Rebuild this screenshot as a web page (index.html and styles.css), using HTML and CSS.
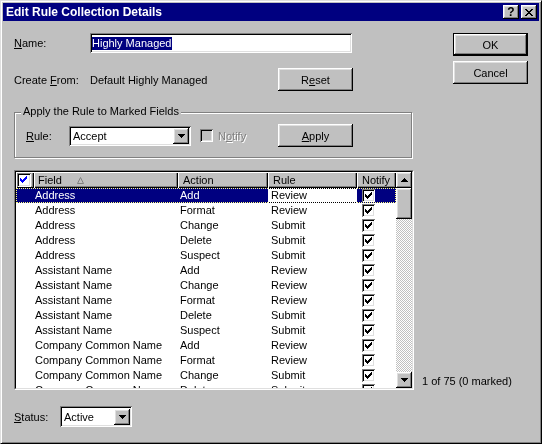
FILE: index.html
```html
<!DOCTYPE html>
<html lang="en">
<head>
    <meta charset="UTF-8">
    <title>Edit Rule Collection Details</title>
    <link rel="stylesheet" href="styles.css">
</head>
<body>
    <!-- shared check mark -->
    <svg class="defs" width="0" height="0">
        <symbol id="tick" viewBox="0 0 13 13">
            <path d="M3 5h1v3h-1zM4 6h1v3h-1zM5 7h1v3h-1zM6 6h1v3h-1zM7 5h1v3h-1zM8 4h1v3h-1zM9 3h1v3h-1z"/>
        </symbol>
        <symbol id="down" viewBox="0 0 7 4">
            <path d="M0 0h7v1h-1v1h-1v1h-1v1h-1v-1h-1v-1h-1v-1h-1z"/>
        </symbol>
    </svg>

    <div class="window">
        <div class="titlebar">
            <span class="title">Edit Rule Collection Details</span>
            <div class="caption-buttons">
                <div class="cap-btn">?</div>
                <div class="cap-btn">
                    <svg width="8" height="7" viewBox="0 0 8 7"><path d="M0 0h2v1h-2zM6 0h2v1h-2zM1 1h2v1h-2zM5 1h2v1h-2zM2 2h4v1h-4zM3 3h2v1h-2zM2 4h4v1h-4zM1 5h2v1h-2zM5 5h2v1h-2zM0 6h2v1h-2zM6 6h2v1h-2z"/></svg>
                </div>
            </div>
        </div>

        <div class="dialog">
            <div class="top">
                <div class="left">
                    <div class="line name-line">
                        <span class="label"><u>N</u>ame:</span>
                        <div class="textbox"><span class="sel">Highly Managed</span></div>
                    </div>
                    <div class="line from-line">
                        <span class="label">Create <u>F</u>rom:</span>
                        <span class="from-value">Default Highly Managed</span>
                        <div class="btn">R<u>e</u>set</div>
                    </div>
                    <div class="group">
                        <span class="group-title">Apply the Rule to Marked Fields</span>
                        <div class="line">
                            <span class="rule-label"><u>R</u>ule:</span>
                            <div class="combo rule-combo">
                                <span class="combo-text">Accept</span>
                                <div class="drop"><svg width="7" height="4"><use href="#down"/></svg></div>
                            </div>
                            <div class="notify">
                                <span class="checkbox disabled"></span>
                                <span class="disabled-text">N<u>o</u>tify</span>
                            </div>
                            <div class="btn"><u>A</u>pply</div>
                        </div>
                    </div>
                </div>
                <div class="actions">
                    <div class="btn default">OK</div>
                    <div class="btn">Cancel</div>
                </div>
            </div>

            <div class="list-area">
                <div class="listview">
                    <div class="list-inner">
                        <div class="grid">
                            <div class="header">
                                <div class="hcell hcheck"><span class="checkbox blue"><svg width="13" height="13"><use href="#tick"/></svg></span></div>
                                <div class="hcell hfield">Field
                                    <svg class="sort" width="7" height="7" viewBox="0 0 7 7"><path d="M0.5 6.5L3.5 0.5L6.5 6.5Z" fill="none" stroke="#808080"/></svg>
                                </div>
                                <div class="hcell">Action</div>
                                <div class="hcell">Rule</div>
                                <div class="hcell">Notify</div>
                            </div>

                            <div class="item selected">
                                <div></div><div class="c-field">Address</div><div class="c-action">Add</div><div class="c-rule">Review</div>
                                <div class="c-notify"><span class="checkbox"><svg width="13" height="13"><use href="#tick"/></svg></span></div>
                            </div>
                            <div class="item">
                                <div></div><div class="c-field">Address</div><div class="c-action">Format</div><div class="c-rule">Review</div>
                                <div class="c-notify"><span class="checkbox"><svg width="13" height="13"><use href="#tick"/></svg></span></div>
                            </div>
                            <div class="item">
                                <div></div><div class="c-field">Address</div><div class="c-action">Change</div><div class="c-rule">Submit</div>
                                <div class="c-notify"><span class="checkbox"><svg width="13" height="13"><use href="#tick"/></svg></span></div>
                            </div>
                            <div class="item">
                                <div></div><div class="c-field">Address</div><div class="c-action">Delete</div><div class="c-rule">Submit</div>
                                <div class="c-notify"><span class="checkbox"><svg width="13" height="13"><use href="#tick"/></svg></span></div>
                            </div>
                            <div class="item">
                                <div></div><div class="c-field">Address</div><div class="c-action">Suspect</div><div class="c-rule">Submit</div>
                                <div class="c-notify"><span class="checkbox"><svg width="13" height="13"><use href="#tick"/></svg></span></div>
                            </div>
                            <div class="item">
                                <div></div><div class="c-field">Assistant Name</div><div class="c-action">Add</div><div class="c-rule">Review</div>
                                <div class="c-notify"><span class="checkbox"><svg width="13" height="13"><use href="#tick"/></svg></span></div>
                            </div>
                            <div class="item">
                                <div></div><div class="c-field">Assistant Name</div><div class="c-action">Change</div><div class="c-rule">Review</div>
                                <div class="c-notify"><span class="checkbox"><svg width="13" height="13"><use href="#tick"/></svg></span></div>
                            </div>
                            <div class="item">
                                <div></div><div class="c-field">Assistant Name</div><div class="c-action">Format</div><div class="c-rule">Review</div>
                                <div class="c-notify"><span class="checkbox"><svg width="13" height="13"><use href="#tick"/></svg></span></div>
                            </div>
                            <div class="item">
                                <div></div><div class="c-field">Assistant Name</div><div class="c-action">Delete</div><div class="c-rule">Submit</div>
                                <div class="c-notify"><span class="checkbox"><svg width="13" height="13"><use href="#tick"/></svg></span></div>
                            </div>
                            <div class="item">
                                <div></div><div class="c-field">Assistant Name</div><div class="c-action">Suspect</div><div class="c-rule">Submit</div>
                                <div class="c-notify"><span class="checkbox"><svg width="13" height="13"><use href="#tick"/></svg></span></div>
                            </div>
                            <div class="item">
                                <div></div><div class="c-field">Company Common Name</div><div class="c-action">Add</div><div class="c-rule">Review</div>
                                <div class="c-notify"><span class="checkbox"><svg width="13" height="13"><use href="#tick"/></svg></span></div>
                            </div>
                            <div class="item">
                                <div></div><div class="c-field">Company Common Name</div><div class="c-action">Format</div><div class="c-rule">Review</div>
                                <div class="c-notify"><span class="checkbox"><svg width="13" height="13"><use href="#tick"/></svg></span></div>
                            </div>
                            <div class="item">
                                <div></div><div class="c-field">Company Common Name</div><div class="c-action">Change</div><div class="c-rule">Submit</div>
                                <div class="c-notify"><span class="checkbox"><svg width="13" height="13"><use href="#tick"/></svg></span></div>
                            </div>
                            <div class="item">
                                <div></div><div class="c-field">Company Common Name</div><div class="c-action">Delete</div><div class="c-rule">Submit</div>
                                <div class="c-notify"><span class="checkbox"><svg width="13" height="13"><use href="#tick"/></svg></span></div>
                            </div>
                        </div>
                        <div class="scrollbar">
                            <div class="sb-btn"><svg class="up" width="7" height="4"><use href="#down"/></svg></div>
                            <div class="sb-thumb"></div>
                            <div class="sb-track"></div>
                            <div class="sb-btn"><svg width="7" height="4"><use href="#down"/></svg></div>
                        </div>
                    </div>
                </div>
                <span class="count">1 of 75 (0 marked)</span>
            </div>

            <div class="line status-line">
                <span class="status-label"><u>S</u>tatus:</span>
                <div class="combo status-combo">
                    <span class="combo-text">Active</span>
                    <div class="drop"><svg width="7" height="4"><use href="#down"/></svg></div>
                </div>
            </div>
        </div>
    </div>
</body>
</html>
```

FILE: styles.css
```css
body {
    margin: 0;
    background-color: #c0c0c0;
    font-family: "Liberation Sans", Arial, sans-serif;
    font-size: 11px;
    color: #000;
}
.defs {
    position: absolute;
}
u {
    text-underline-offset: 1px;
}
.window {
    width: 542px;
    height: 444px;
    box-sizing: border-box;
    padding: 2px;
    background-color: #c0c0c0;
    border: 1px solid;
    border-color: #dfdfdf #000 #000 #dfdfdf;
    box-shadow: inset 1px 1px #fff, inset -1px -1px #808080;
}

/* title bar */
.titlebar {
    height: 18px;
    background-color: #000080;
    display: flex;
    align-items: center;
    justify-content: space-between;
    padding: 0 2px 0 3px;
}
.title {
    color: #fff;
    font-weight: bold;
    font-size: 12px;
}
.caption-buttons {
    display: flex;
    gap: 2px;
}
.cap-btn {
    width: 16px;
    height: 14px;
    background-color: #c0c0c0;
    box-shadow: inset -1px -1px #000, inset 1px 1px #fff, inset -2px -2px #808080, inset 2px 2px #dfdfdf;
    display: flex;
    align-items: center;
    justify-content: center;
    font-weight: bold;
    font-size: 12px;
    line-height: 14px;
}

/* common controls */
.btn {
    width: 75px;
    height: 23px;
    box-sizing: border-box;
    background-color: #c0c0c0;
    box-shadow: inset -1px -1px #000, inset 1px 1px #fff, inset -2px -2px #808080, inset 2px 2px #dfdfdf;
    display: flex;
    align-items: center;
    justify-content: center;
    flex-shrink: 0;
}
.btn.default {
    border: 1px solid #000;
}
.checkbox {
    display: block;
    width: 13px;
    height: 13px;
    background-color: #fff;
    box-shadow: inset 1px 1px #808080, inset -1px -1px #fff, inset 2px 2px #000, inset -2px -2px #dfdfdf;
    flex-shrink: 0;
}
.checkbox svg {
    display: block;
}
.checkbox.disabled {
    background-color: #c0c0c0;
}
.checkbox.blue {
    fill: #0000ff;
}
.combo {
    height: 20px;
    box-sizing: border-box;
    background-color: #fff;
    padding: 2px;
    display: flex;
    align-items: center;
    justify-content: space-between;
    box-shadow: inset 1px 1px #808080, inset -1px -1px #fff, inset 2px 2px #000, inset -2px -2px #dfdfdf;
}
.combo-text {
    padding-left: 2px;
}
.drop {
    width: 16px;
    height: 16px;
    background-color: #c0c0c0;
    box-shadow: inset -1px -1px #000, inset 1px 1px #fff, inset -2px -2px #808080, inset 2px 2px #dfdfdf;
    display: flex;
    align-items: center;
    justify-content: center;
}

/* dialog body */
.dialog {
    padding: 12px 11px 0 11px;
}
.top {
    display: flex;
}
.left {
    width: 400px;
}
.actions {
    margin-left: 39px;
    width: 75px;
    display: flex;
    flex-direction: column;
    gap: 5px;
}
.line {
    display: flex;
    align-items: center;
}
.label {
    width: 76px;
    flex-shrink: 0;
}
.name-line {
    height: 20px;
}
.textbox {
    width: 262px;
    height: 20px;
    box-sizing: border-box;
    background-color: #fff;
    padding: 2px;
    display: flex;
    align-items: center;
    box-shadow: inset 1px 1px #808080, inset -1px -1px #fff, inset 2px 2px #000, inset -2px -2px #dfdfdf;
}
.sel {
    background-color: #000080;
    color: #fff;
    line-height: 13px;
}
.from-line {
    margin-top: 15px;
    height: 23px;
}
.from-value {
    width: 188px;
}

/* group box */
.group {
    position: relative;
    margin-top: 21px;
    width: 398px;
    box-sizing: border-box;
    border: 1px solid #808080;
    box-shadow: inset 1px 1px #fff, 1px 1px #fff;
    padding: 11px 0 10px 11px;
}
.group-title {
    position: absolute;
    top: -8px;
    left: 6px;
    padding: 0 2px;
    background-color: #c0c0c0;
    line-height: 13px;
}
.rule-label {
    width: 43px;
}
.rule-combo {
    width: 122px;
}
.notify {
    width: 87px;
    box-sizing: border-box;
    padding-left: 9px;
    display: flex;
    align-items: center;
}
.disabled-text {
    margin-left: 5px;
    color: #808080;
    text-shadow: 1px 1px #fff;
}

/* list */
.list-area {
    margin-top: 12px;
    display: flex;
    align-items: flex-end;
}
.listview {
    width: 400px;
    height: 220px;
    box-sizing: border-box;
    border: 1px solid;
    border-color: #808080 #fff #fff #808080;
}
.list-inner {
    height: 100%;
    box-sizing: border-box;
    border: 1px solid;
    border-color: #000 #dfdfdf #dfdfdf #000;
    background-color: #fff;
    display: flex;
}
.grid {
    width: 380px;
    overflow: hidden;
}
.header,
.item {
    display: grid;
    grid-template-columns: 18px 144px 90px 89px 39px;
}
.header {
    height: 16px;
}
.hcell {
    background-color: #c0c0c0;
    box-shadow: inset 1px 1px #fff, inset -1px -1px #000, inset -2px -2px #808080;
    padding-left: 5px;
    display: flex;
    align-items: center;
    line-height: 16px;
}
.hcell.hfield {
    padding-left: 4px;
}
.hcell.hcheck {
    padding-left: 1px;
}
.hcheck .checkbox {
    width: 14px;
    height: 14px;
}
.sort {
    margin-left: 15px;
}
.item {
    position: relative;
    height: 15px;
    line-height: 15px;
    white-space: nowrap;
}
.c-field {
    padding-left: 1px;
}
.c-action {
    padding-left: 2px;
}
.c-rule {
    padding-left: 3px;
}
.c-notify {
    padding-left: 5px;
    display: flex;
    align-items: center;
}
.item.selected {
    background-color: #000080;
    color: #fff;
}
.item.selected .c-rule {
    background-color: #fff;
    color: #000;
}
.item.selected::after {
    content: "";
    position: absolute;
    inset: 0;
    border: 1px dotted #fff;
    mix-blend-mode: difference;
}

/* scrollbar */
.scrollbar {
    width: 16px;
    display: flex;
    flex-direction: column;
}
.sb-btn,
.sb-thumb {
    background-color: #c0c0c0;
    box-shadow: inset -1px -1px #000, inset 1px 1px #fff, inset -2px -2px #808080, inset 2px 2px #dfdfdf;
}
.sb-btn {
    height: 16px;
    display: flex;
    align-items: center;
    justify-content: center;
}
.sb-btn .up {
    transform: rotate(180deg);
}
.sb-thumb {
    height: 31px;
}
.sb-track {
    flex: 1;
    background-color: #fff;
    background-image: repeating-conic-gradient(#c0c0c0 0 25%, #fff 0 50%);
    background-size: 2px 2px;
}
.count {
    margin-left: 8px;
    margin-bottom: 3px;
}

/* status */
.status-line {
    margin-top: 16px;
}
.status-label {
    width: 46px;
}
.status-combo {
    width: 72px;
    height: 21px;
}
```
